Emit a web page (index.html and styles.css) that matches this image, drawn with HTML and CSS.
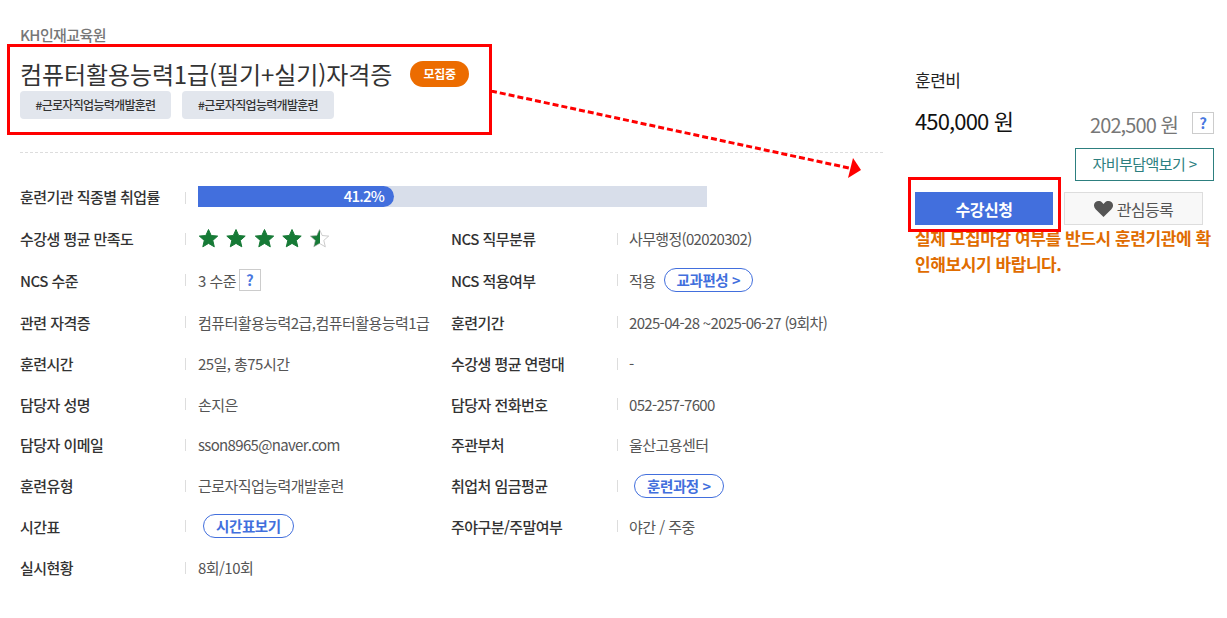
FILE: index.html
```html
<!DOCTYPE html>
<html lang="ko">
<head>
<meta charset="utf-8">
<title>컴퓨터활용능력1급(필기+실기)자격증</title>
<link rel="stylesheet" href="styles.css">
</head>
<body>
<div class="page">
  <main class="detail">
    <div class="org">KH인재교육원</div>
    <h1 class="title"><span>컴퓨터활용능력1급(필기+실기)자격증</span><em class="badge">모집중</em></h1>
    <div class="tags"><span class="tag">#근로자직업능력개발훈련</span><span class="tag">#근로자직업능력개발훈련</span></div>
    <div class="divider"></div>
    <div class="rate-row">
      <div class="label">훈련기관 직종별 취업률</div>
      <div class="bar"><div class="bar-fill" style="width:196px">41.2%</div></div>
    </div>
    <div class="info">
      <div class="row r1">
        <div class="label">수강생 평균 만족도</div>
        <div class="value stars">
          <svg width="134" height="22" viewBox="0 0 134 22">
            <defs><linearGradient id="half"><stop offset="50%" stop-color="#167a36"/><stop offset="50%" stop-color="#fff"/></linearGradient>
            <path id="s" d="M9.500 .5l2.700 6 6.500.6-4.900 4.300 1.500 6.400-5.800-3.400-5.700 3.400 1.500-6.400L.3 7.100l6.500-.6z"/></defs>
            <use href="#s" x="1" y="1" fill="#167a36" stroke="#167a36" stroke-width="1"/>
            <use href="#s" x="28.500" y="1" fill="#167a36" stroke="#167a36" stroke-width="1"/>
            <use href="#s" x="57" y="1" fill="#167a36" stroke="#167a36" stroke-width="1"/>
            <use href="#s" x="84.500" y="1" fill="#167a36" stroke="#167a36" stroke-width="1"/>
            <use href="#s" x="112" y="1" fill="url(#half)" stroke="#aaa" stroke-width=".6"/>
          </svg>
        </div>
        <div class="label">NCS 직무분류</div>
        <div class="value num">사무행정(02020302)</div>
      </div>
      <div class="row r2">
        <div class="label">NCS 수준</div>
        <div class="value">3 수준 <span class="help">?</span></div>
        <div class="label">NCS 적용여부</div>
        <div class="value">적용 <a class="pill pill-a">교과편성 &gt;</a></div>
      </div>
      <div class="row r3">
        <div class="label">관련 자격증</div>
        <div class="value">컴퓨터활용능력2급,컴퓨터활용능력1급</div>
        <div class="label">훈련기간</div>
        <div class="value num">2025-04-28 ~2025-06-27 (9회차)</div>
      </div>
      <div class="row r4">
        <div class="label">훈련시간</div>
        <div class="value">25일, 총75시간</div>
        <div class="label">수강생 평균 연령대</div>
        <div class="value">-</div>
      </div>
      <div class="row r4">
        <div class="label">담당자 성명</div>
        <div class="value">손지은</div>
        <div class="label">담당자 전화번호</div>
        <div class="value num">052-257-7600</div>
      </div>
      <div class="row r4">
        <div class="label">담당자 이메일</div>
        <div class="value num">sson8965@naver.com</div>
        <div class="label">주관부처</div>
        <div class="value">울산고용센터</div>
      </div>
      <div class="row r4">
        <div class="label">훈련유형</div>
        <div class="value">근로자직업능력개발훈련</div>
        <div class="label">취업처 임금평균</div>
        <div class="value"><a class="pill pill-b">훈련과정 &gt;</a></div>
      </div>
      <div class="row r4">
        <div class="label">시간표</div>
        <div class="value"><a class="pill pill-c">시간표보기</a></div>
        <div class="label">주야구분/주말여부</div>
        <div class="value">야간 / 주중</div>
      </div>
      <div class="row r5">
        <div class="label">실시현황</div>
        <div class="value">8회/10회</div>
      </div>
    </div>
  </main>
  <aside class="side">
    <div class="fee-title">훈련비</div>
    <div class="fee-row">
      <div class="fee-main">450,000 원</div>
      <div class="fee-sub">202,500 원</div>
      <span class="help help-lg">?</span>
    </div>
    <div class="self-wrap"><a class="self-btn">자비부담액보기 &gt;</a></div>
    <div class="actions">
      <button class="apply">수강신청</button>
      <button class="wish"><svg width="19" height="16" viewBox="0 0 19 16"><path d="M9.500 16L1.600 8.200C-.5 6.100-.5 3 1.300 1.300 3.200-.5 6.300-.4 8.100 1.500L9.500 3l1.400-1.500c1.800-1.900 4.900-2 6.800-.2 1.800 1.700 1.800 4.800-.3 6.900z" fill="#555"/></svg>관심등록</button>
    </div>
    <p class="notice">실제 모집마감 여부를 반드시 훈련기관에 확인해보시기 바랍니다.</p>
  </aside>
</div>
<div class="mark mark-title"></div>
<div class="mark mark-apply"></div>
<svg class="arrow" width="380" height="100" viewBox="0 0 380 100">
  <path d="M1 1L359 78" fill="none" stroke="#f00" stroke-width="3" stroke-dasharray="6 3"/>
  <path d="M371 80L363 68L358 88z" fill="#f00"/>
</svg>
</body>
</html>
```
FILE: styles.css
```css
* { box-sizing: border-box; }
html, body { margin: 0; padding: 0; background: #fff; }
body {
  width: 1227px;
  height: 618px;
  overflow: hidden;
  position: relative;
  font-family: "Noto Sans CJK KR", "Noto Sans", sans-serif;
  color: #333;
}
.page { display: flex; padding: 25px 0 0 20px; }
.detail { width: 863px; flex: none; }
.org { font-size: 15px; line-height: 20px; font-weight: 500; color: #777; letter-spacing: -.6px; }
.title {
  display: flex;
  align-items: center;
  margin: 12px 0 0;
  height: 33px;
  font-size: 24px;
  line-height: 33px;
  font-weight: 400;
  color: #333;
  letter-spacing: -.1px;
}
.badge {
  width: 59px; height: 26px; margin-left: 18px;
  border-radius: 13px;
  background: #ec6c00;
  color: #fff;
  font-style: normal;
  font-size: 12px; font-weight: 700;
  line-height: 26px; text-align: center;
  letter-spacing: -.3px;
}
.tags { display: flex; gap: 11px; margin-top: 1px; }
.tag {
  width: 151px; height: 28px;
  border-radius: 4px;
  background: #e2e6ed;
  font-size: 12px; font-weight: 500;
  line-height: 28px; text-align: center;
  letter-spacing: -.7px;
}
.tag + .tag { width: 152px; }
.divider { margin-top: 33px; border-top: 1px dashed #ddd; }
.label {
  font-size: 15px; font-weight: 500; color: #333;
  letter-spacing: -.55px; white-space: nowrap;
}
.rate-row { display: flex; align-items: center; margin-top: 33px; height: 21px; }
.rate-row .label { width: 165px; position: relative; }
.rate-row .label::after, .value::before {
  content: ""; position: absolute; width: 1px; height: 12px; background: #ddd;
}
.rate-row .label::after { left: 165px; top: 6px; }
.bar { width: 509px; height: 21px; margin-left: 13px; background: #d8deea; }
.bar-fill {
  height: 21px; background: #426fdd; color: #fff;
  border-radius: 0 11px 11px 0;
  font-size: 15px; font-weight: 500; line-height: 20px;
  text-align: right; padding-right: 10px; letter-spacing: -.8px;
}
.info { margin-top: 11px; }
.row { display: grid; grid-template-columns: 165px 266px 166px auto; align-items: center; }
.r1 { height: 41px; }
.r2 { height: 42px; }
.r3 { height: 42.500px; }
.r4 { height: 40.600px; }
.r5 { height: 43px; }
.value {
  position: relative;
  padding-left: 13px;
  font-size: 15px; font-weight: 400; color: #555;
  letter-spacing: -.55px; white-space: nowrap;
  display: flex; align-items: center; gap: 3px; height: 24px;
}
.value:nth-child(4) { padding-left: 12px; }
.value::before { left: 0; top: 6px; }
.num { letter-spacing: -.67px; }
.stars svg { display: block; }
.help {
  display: inline-block; width: 22px; height: 22px;
  border: 1px solid #ccc;
  color: #4a78e0; font-size: 15px; font-weight: 700;
  line-height: 20px; text-align: center; letter-spacing: 0;
}
.pill {
  display: inline-block; height: 24px; padding: 0 12px;
  border: 1px solid #426fdd; border-radius: 12px;
  color: #426fdd; font-size: 14.500px; font-weight: 700;
  line-height: 21px; letter-spacing: -.4px;
}
.pill-a { margin-left: 5px; }
.pill-b { margin-left: 5px; }
.pill-c { margin-left: 5px; }
.side { width: 299px; margin-left: 32px; padding-top: 41px; }
.fee-title { font-size: 17px; line-height: 28px; font-weight: 400; color: #222; letter-spacing: -.5px; }
.fee-row { display: flex; align-items: center; height: 32px; margin-top: 11px; }
.fee-main { width: 175px; margin-bottom: 2px; font-size: 22px; font-weight: 400; color: #111; letter-spacing: -.85px; }
.fee-sub { width: 102px; margin-top: 6px; font-size: 20px; color: #777; letter-spacing: -.9px; }
.help-lg { margin-top: 4px; margin-left: 0; }
.self-wrap { display: flex; justify-content: flex-end; margin: 11px 0 0; width: 299px; }
.self-btn {
  display: block; width: 139px; height: 33px;
  border: 1px solid #2d7f7f; color: #2d7f7f;
  font-size: 15px; line-height: 30px; text-align: center;
  letter-spacing: -.55px;
}
.actions { display: flex; gap: 11px; margin-top: 11px; }
.apply {
  width: 138px; height: 33px; border: 0; padding: 0;
  background: #426fdd; color: #fff;
  font: 700 16px "Noto Sans CJK KR", sans-serif; letter-spacing: -.5px;
}
.wish {
  display: flex; align-items: center; justify-content: center; gap: 4px;
  width: 139px; height: 33px; padding: 0;
  border: 1px solid #ddd; background: #f8f8f8; color: #555;
  font: 400 16px "Noto Sans CJK KR", sans-serif; letter-spacing: -.6px;
}
.notice {
  width: 299px; margin: 0;
  font-size: 17px; line-height: 26px; font-weight: 700; color: #e06c00;
  letter-spacing: -.42px; word-break: break-all;
}
.mark { position: absolute; border: 3px solid #f00; }
.mark-title { left: 7px; top: 44px; width: 485px; height: 91px; }
.mark-apply { left: 908px; top: 177px; width: 153px; height: 55px; }
.arrow { position: absolute; left: 490px; top: 90px; }
```
